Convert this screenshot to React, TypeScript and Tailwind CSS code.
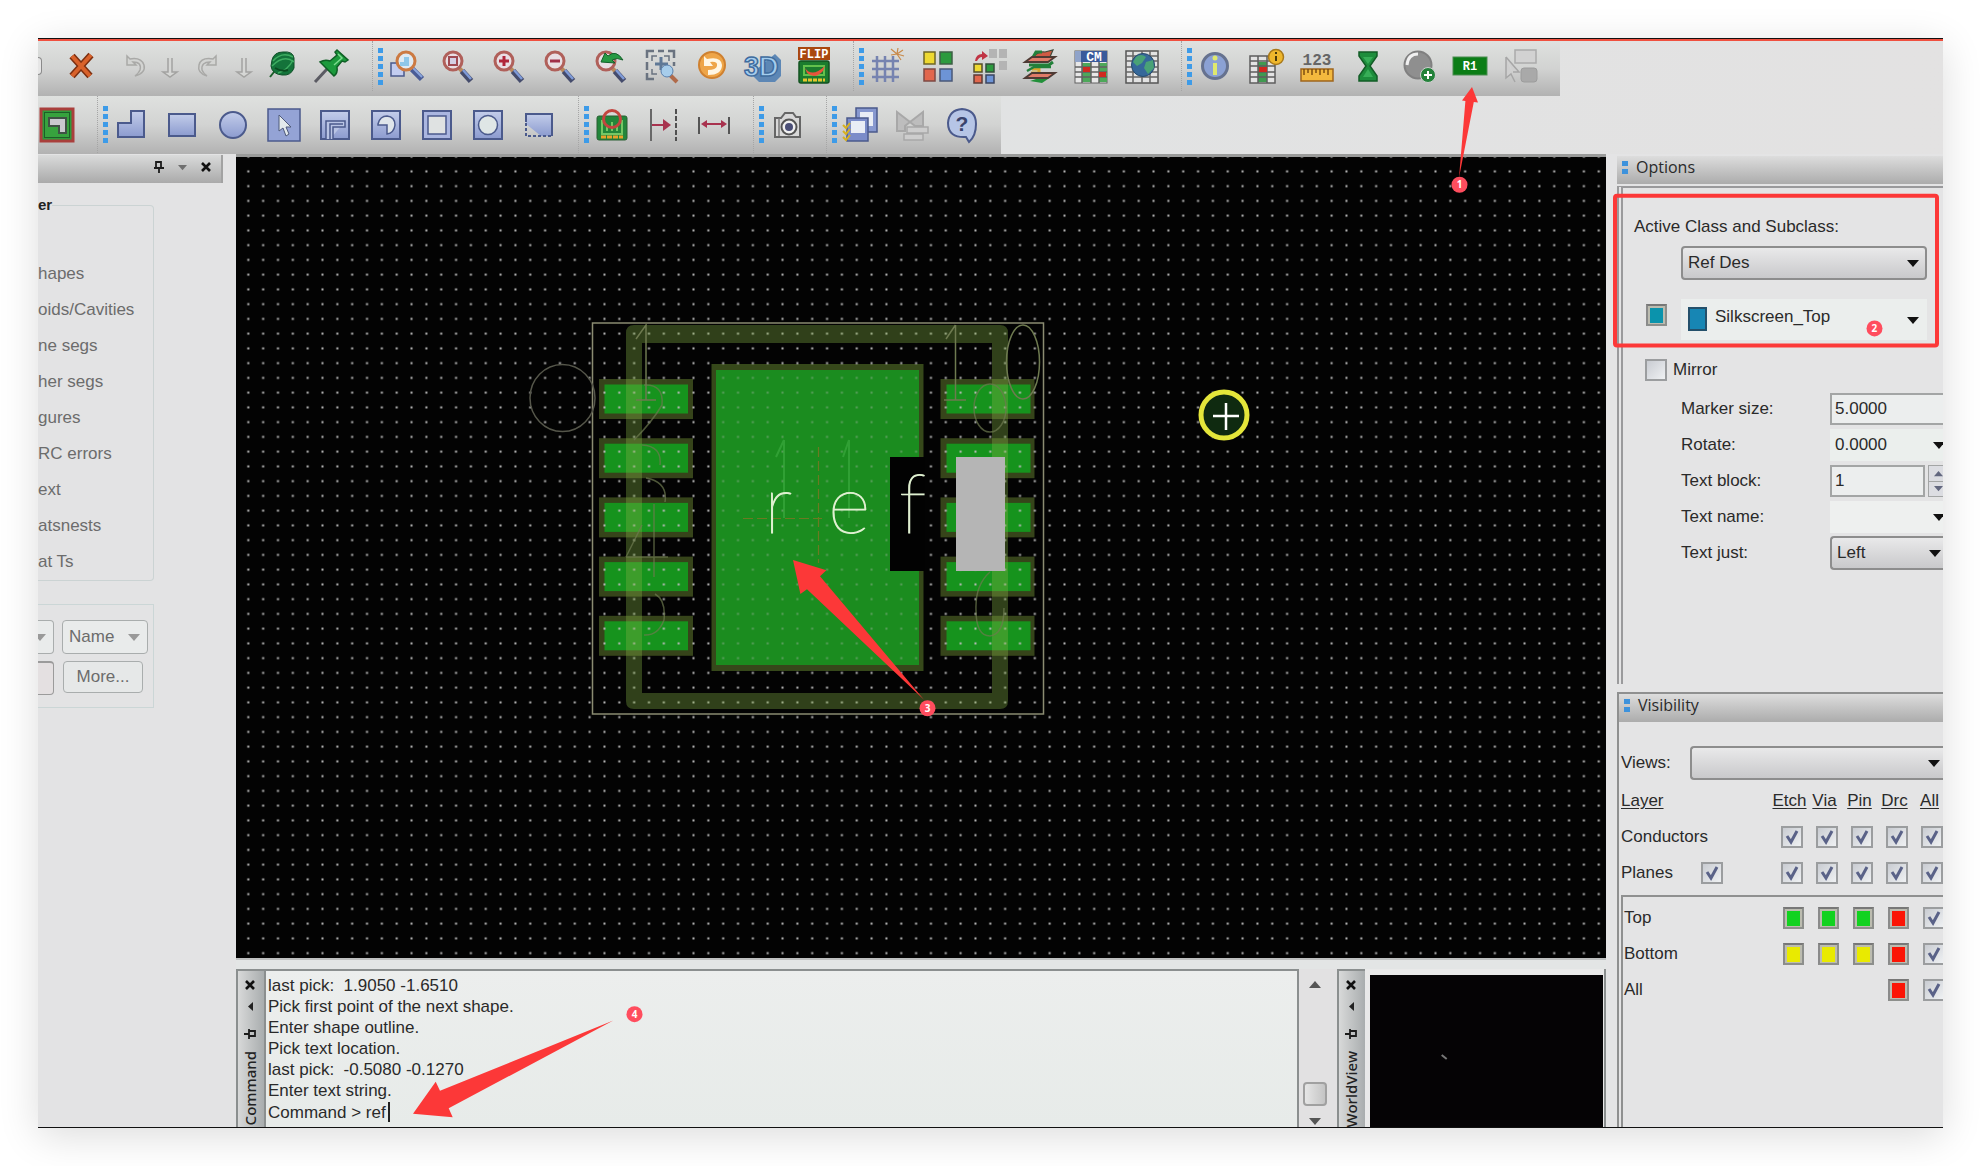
import React from "react";

const SLATE = "#4b5a8c";

function Svg({ children, s = 36 }: { children: React.ReactNode; s?: number }) {
  return (
    <svg width={s} height={s} viewBox="0 0 36 36" fill="none" className="shrink-0 overflow-visible" aria-hidden="true">
      {children}
    </svg>
  );
}

function Lens({ children, ring = "#b0605a" }: { children?: React.ReactNode; ring?: string }) {
  return (
    <>
      <path d="M20 20 L24 24" stroke="#b98a5e" strokeWidth="4" />
      <path d="M23 23 L32 33" stroke="#454c6c" strokeWidth="6" />
      <path d="M24 22 L32 31" stroke="#7f9bd8" strokeWidth="2.5" />
      <circle cx="14" cy="13" r="9" fill="#e9dfe4" stroke={ring} strokeWidth="3" />
      {children}
    </>
  );
}

const icons: Record<string, React.ReactNode> = {
  cross: (
    <>
      <path d="M9 8 L27 28 M28 7 L9 28" stroke="#7c2f10" strokeWidth="7" />
      <path d="M9 8 L27 28 M28 7 L9 28" stroke="#d9622b" strokeWidth="4" />
    </>
  ),
  undo: <path d="M10 8 L10 17 L19 17 L16 14 Q25 14 23 22 Q22 25 18 28 Q29 25 27 17 Q24 9 13 11 Z" stroke="#a9a9a7" strokeWidth="1.5" fill="#d3d4d2" />,
  redo: <path d="M27 8 L27 17 L18 17 L21 14 Q12 14 13 22 Q14 25 18 28 Q8 25 10 17 Q12 9 24 11 Z" stroke="#a9a9a7" strokeWidth="1.5" fill="#d3d4d2" />,
  down: <path d="M16 10 V24 H11 L18 29 L25 24 H20 V10" stroke="#a3a3a1" strokeWidth="1.5" fill="#d6d7d5" />,
  yarn: (
    <>
      <path d="M10 24 L6 29" stroke="#1c5f2a" strokeWidth="2" />
      <path d="M8 12 Q10 4 19 4 Q29 3 30 10 V20 Q27 28 18 27 Q8 26 7 18 Z" fill="#14733a" stroke="#0d4f26" />
      <path d="M9 13 Q18 3 29 9 M8 18 Q20 6 30 14 M14 25 Q24 22 29 12" stroke="#3fae62" strokeWidth="1.5" />
      <path d="M11 20 Q18 24 24 22" stroke="#0b4a20" strokeWidth="2" />
    </>
  ),
  pin: (
    <>
      <path d="M14 21 L2 34" stroke="#5b5b63" strokeWidth="3" />
      <path d="M24 2 L35 12 L32 14 L29 13 L24 19 Q25 25 21 28 L7 14 Q12 11 17 13 L24 7 L22 4 Z" fill="#1c9a3c" stroke="#0f5f25" strokeWidth="1.5" />
      <path d="M25 6 L29 10 L21 17" stroke="#7bdb8d" strokeWidth="1.5" />
    </>
  ),
  zoomWindow: (
    <>
      <rect x="3" y="15" width="13" height="13" fill="#c3cdf0" stroke={SLATE} strokeWidth="1.5" />
      <path d="M24 21 L34 31" stroke="#4a5c96" strokeWidth="6" />
      <path d="M25 20 L34 29" stroke="#8aa5dc" strokeWidth="2" />
      <circle cx="18" cy="13" r="9" fill="#dfeaf2" stroke="#cc7a42" strokeWidth="3" />
      <path d="M12 14 V18 H21 V9 H16 V14 Z" fill="#8fc7e8" />
    </>
  ),
  zoomRect: <Lens><rect x="10" y="9" width="8" height="8" fill="#d4d0e4" stroke="#a04a52" strokeWidth="2" /></Lens>,
  zoomIn: <Lens><path d="M9 13 H19 M14 8 V18" stroke="#b0263a" strokeWidth="3" /></Lens>,
  zoomOut: <Lens><path d="M9 13 H19" stroke="#a0304a" strokeWidth="3" /></Lens>,
  zoomPrev: <Lens><path d="M9 14 L13 5 L16 8 Q24 1 31 12 Q25 9 20 12 L23 15 Z" fill="#279a43" stroke="#14602a" /></Lens>,
  zoomFit: (
    <>
      <path d="M4 10 V3 H11 M15 3 H21 M25 3 H31 V10 M4 14 V22 M4 25 V31 H11 M31 14 V18" stroke="#6a7380" strokeWidth="2.5" />
      <path d="M9 13 V8 H14 M21 8 H26 V13 M9 21 V26 H14" stroke="#6a7380" strokeWidth="1.5" />
      <path d="M18 9 V22 M12 16 H25" stroke="#5f7896" strokeWidth="3" />
      <path d="M27 27 L34 34" stroke="#b06a4a" strokeWidth="4" />
      <circle cx="24" cy="23" r="6" fill="#a7cdeb" stroke="#5a80ad" />
    </>
  ),
  refresh: (
    <>
      <circle cx="18" cy="17" r="13" fill="#eea548" stroke="#cf8130" strokeWidth="2" />
      <path d="M10 8 V18 H19 L16 14 Q24 13 23 18 Q22 22 14 22 V27 Q28 27 28 17 Q27 8 13 11 Z" fill="#fff6e3" />
    </>
  ),
  threeD: (
    <>
      <path d="M6 26 L14 34 H30 L36 28 V12 L30 6 Z" fill="#5d87b5" />
      <text x="-1" y="28" fontFamily="Liberation Sans" fontSize="27" fontWeight="700" fill="#a4cdee" stroke="#3f6c9e" strokeWidth="1.5">3D</text>
    </>
  ),
  flip: (
    <>
      <rect x="3" y="13" width="30" height="22" rx="2" fill="#1c7c2e" stroke="#125220" strokeWidth="1.5" />
      <path d="M8 18 H28 V27 H8 Z" stroke="#63c14c" strokeWidth="2" />
      <path d="M9 20 Q16 30 29 18 L27 23 Q19 32 11 25 Z" fill="#e8543b" />
      <path d="M7 32 H29" stroke="#e5c42e" strokeWidth="3" strokeDasharray="4 1" />
      <rect x="2" y="-1" width="32" height="13" fill="#a9480f" />
      <text x="18" y="10" textAnchor="middle" fontFamily="Liberation Mono" fontSize="12" fontWeight="700" fill="#fff">FLIP</text>
    </>
  ),
  grid: (
    <>
      <path d="M8 8 V34 M16 8 V34 M24 8 V34 M3 13 H30 M3 21 H30 M3 29 H30" stroke="#7683b0" strokeWidth="2.5" />
      <path d="M28 6 L22 1 M28 6 L29 0 M28 6 L34 2 M28 6 L35 8 M28 6 L32 12 M28 6 L22 7" stroke="#c98a4a" strokeWidth="1.2" />
    </>
  ),
  squares: (
    <>
      <rect x="4" y="4" width="11" height="12" fill="#eed931" stroke="#6e6526" strokeWidth="1.5" />
      <rect x="20" y="4" width="12" height="12" fill="#2c9a3e" stroke="#3e5f45" strokeWidth="1.5" />
      <rect x="4" y="21" width="11" height="12" fill="#e2674d" stroke="#7d4a44" strokeWidth="1.5" />
      <rect x="20" y="21" width="12" height="12" fill="#6d94d6" stroke="#4a5878" strokeWidth="1.5" />
    </>
  ),
  squaresMove: (
    <>
      <rect x="18" y="1" width="8" height="9" fill="#b4b4b4" /><rect x="28" y="1" width="8" height="9" fill="#b4b4b4" />
      <rect x="28" y="13" width="8" height="9" fill="#b4b4b4" />
      <path d="M4 13 Q5 6 11 6 V3 L17 8 L11 12 V9 Q8 9 6 13 Z" fill="#c03444" />
      <rect x="3" y="16" width="8" height="8" fill="#eed931" stroke="#554f2a" strokeWidth="1.5" />
      <rect x="15" y="16" width="8" height="8" fill="#2c9a3e" stroke="#354f3b" strokeWidth="1.5" />
      <rect x="3" y="27" width="8" height="8" fill="#e2674d" stroke="#5e3b36" strokeWidth="1.5" />
      <rect x="15" y="27" width="8" height="8" fill="#6d94d6" stroke="#3b4560" strokeWidth="1.5" />
    </>
  ),
  layers: (
    <>
      <path d="M12 8 Q17 3 23 4 L31 2 L28 9 H14 Z" fill="#cf5a44" stroke="#3e4a3a" strokeWidth="1.2" />
      <path d="M10 11 L14 4 H20" stroke="#22803a" strokeWidth="3" />
      <path d="M3 14 L10 9 H33 L26 14 Z" fill="#e07b68" stroke="#4e3a34" strokeWidth="1.8" />
      <path d="M7 17 H27 L31 14" stroke="#22803a" strokeWidth="3" />
      <path d="M10 21 H17 V25 H9" stroke="#d8a62e" strokeWidth="3" />
      <path d="M5 23 L12 19 H29" stroke="#22803a" strokeWidth="2.5" />
      <path d="M3 30 L10 25 H33 L26 30 Z" fill="#e07b68" stroke="#4e3a34" strokeWidth="1.8" />
      <path d="M8 33 L14 31 H26 L20 35 Z" fill="#22903a" />
    </>
  ),
  cm: (
    <>
      <rect x="2" y="3" width="32" height="32" fill="#e8e8e8" stroke="#626262" />
      <rect x="2" y="3" width="32" height="11" fill="#8fa3c9" />
      <rect x="8" y="3" width="26" height="11" fill="#3a5a9b" />
      <path d="M9 15 H18 V34 H9 Z M26 15 H34 V34 H26 Z" fill="#4da85a" />
      <path d="M2 19 H34 M2 24 H34 M2 29 H34 M9 14 V35 M18 14 V35 M26 14 V35" stroke="#626262" strokeWidth="1.5" />
      <rect x="10" y="19" width="7" height="5" fill="#d02a20" /><rect x="26" y="24" width="7" height="5" fill="#d02a20" />
      <text x="21" y="13" textAnchor="middle" fontFamily="Liberation Mono" fontSize="13" fontWeight="700" fill="#fff">CM</text>
    </>
  ),
  globe: (
    <>
      <rect x="2" y="3" width="32" height="32" fill="#e2e2e2" stroke="#555" strokeWidth="1.5" />
      <path d="M2 8 H34 M2 13 H34 M2 19 H34 M2 24 H34 M2 29 H34 M9 3 V35 M18 3 V35 M26 3 V35" stroke="#666" strokeWidth="1.5" />
      <circle cx="19" cy="17" r="11.5" fill="#35689a" stroke="#274a6b" />
      <path d="M12 9 Q17 5 22 9 L18 15 L13 18 L9 14 Z M22 14 L29 12 L30 20 L24 26 L20 20 Z" fill="#49a276" />
    </>
  ),
  info: (
    <>
      <circle cx="18" cy="18" r="12.5" fill="#8ba1d4" stroke="#66728f" strokeWidth="3" />
      <path d="M18 15 V27" stroke="#dfe86d" strokeWidth="4" /><circle cx="18" cy="10" r="2.5" fill="#dfe86d" />
    </>
  ),
  tableInfo: (
    <>
      <rect x="2" y="8" width="25" height="27" fill="#e3e3e3" stroke="#5e5e5e" strokeWidth="1.5" />
      <path d="M10 14 H19 V34 H10 Z" fill="#3f9a50" />
      <path d="M2 13 H27 M2 18 H27 M2 24 H27 M2 29 H27 M10 8 V35 M19 8 V35" stroke="#5e5e5e" strokeWidth="1.5" />
      <rect x="11" y="19" width="8" height="5" fill="#d0281f" />
      <circle cx="28" cy="9" r="7.5" fill="#eeb72c" stroke="#a9791a" strokeWidth="1.5" />
      <path d="M28 8 V13 M28 4 V6" stroke="#4a3a0a" strokeWidth="2" />
    </>
  ),
  ruler: (
    <>
      <text x="18" y="17" textAnchor="middle" fontFamily="Liberation Mono" fontSize="16" fontWeight="700" fill="#666">123</text>
      <rect x="2" y="21" width="32" height="12" fill="#f3b93e" stroke="#9e651c" strokeWidth="1.5" />
      <path d="M5 21 V27 M9 21 V25 M13 21 V27 M17 21 V25 M21 21 V27 M25 21 V25 M29 21 V27" stroke="#7d4f12" strokeWidth="1.5" />
    </>
  ),
  hourglass: (
    <>
      <path d="M9 4 H27 V8 L20 18 L27 28 V33 H9 V28 L16 18 L9 8 Z" fill="#1d8d3c" stroke="#125c26" strokeWidth="1.5" />
      <path d="M13 9 H23 L18 16 Z M13 29 L18 21 L23 29 Z" fill="#37ae57" />
    </>
  ),
  addCircle: (
    <>
      <circle cx="17" cy="17" r="13.5" fill="#8f8f8f" stroke="#808080" strokeWidth="2" />
      <path d="M6 17 Q7 6 17 6" stroke="#f0f0f0" strokeWidth="3" />
      <circle cx="27" cy="27" r="7.5" fill="#23823a" stroke="#d0d0d0" strokeWidth="1" />
      <path d="M23 27 H31 M27 23 V31" stroke="#fff" strokeWidth="2" />
    </>
  ),
  r1: (
    <>
      <rect x="1" y="9" width="34" height="18" fill="#0b7d16" stroke="#4a8d50" />
      <text x="18" y="22" textAnchor="middle" fontFamily="Liberation Mono" fontSize="12" fontWeight="700" fill="#fff">R1</text>
    </>
  ),
  ghost: (
    <>
      <rect x="12" y="2" width="21" height="13" fill="#d2d2d2" stroke="#ababab" strokeWidth="1.5" />
      <rect x="18" y="20" width="16" height="14" rx="3" fill="#a9a9a9" stroke="#9c9c9c" />
      <path d="M3 9 V30 L8 26 L12 34 M3 9 L16 24 H10" stroke="#a6a6a6" strokeWidth="1.5" fill="#cfcfcf" />
    </>
  ),
  shapeSel: (
    <>
      <rect x="2" y="2" width="32" height="32" fill="#2f9a3a" stroke="#a93f3c" strokeWidth="3" />
      <rect x="5.500" y="5.500" width="25" height="25" fill="#37a23e" stroke="#1c5f28" />
      <path d="M10 11 H27 V26 H20 V19 H10 Z" fill="#c9c9cf" stroke="#3f5245" strokeWidth="2" />
    </>
  ),
  lshape: <path d="M18 4 H31 V30 H5 V16 H18 Z" fill="url(#steel)" stroke={SLATE} strokeWidth="2" />,
  rect: <rect x="5" y="7" width="26" height="22" fill="url(#steel)" stroke={SLATE} strokeWidth="2" />,
  circle: <circle cx="18" cy="18" r="13" fill="url(#steel)" stroke={SLATE} strokeWidth="2" />,
  select: (
    <>
      <rect x="2" y="2" width="32" height="32" fill="#94a3d5" stroke={SLATE} strokeWidth="1.5" />
      <path d="M13 8 V24 L17 21 L20 29 L23 27 L20 20 H25 Z" fill="#e3eaec" stroke="#4f5a7a" />
    </>
  ),
  lpath: (
    <>
      <rect x="4" y="4" width="28" height="28" fill="url(#steel)" stroke={SLATE} strokeWidth="2" />
      <path d="M9 32 V14 H28 V20 H16 V32 M13 32 V17 H26" fill="#b9c4e4" stroke={SLATE} strokeWidth="1.5" />
    </>
  ),
  arc: (
    <>
      <rect x="4" y="4" width="28" height="28" fill="url(#steel)" stroke={SLATE} strokeWidth="2" />
      <path d="M10 17 Q12 9 19 9 Q27 10 27 18 Q26 26 19 27 V18 H10 Z" fill="#dfe5ea" stroke={SLATE} strokeWidth="1.5" />
    </>
  ),
  square: (
    <>
      <rect x="4" y="4" width="28" height="28" fill="#aab6e0" stroke={SLATE} strokeWidth="2" />
      <rect x="9" y="9" width="18" height="18" fill="#dfe2e2" stroke={SLATE} strokeWidth="1.5" />
    </>
  ),
  hole: (
    <>
      <rect x="4" y="4" width="28" height="28" fill="url(#steel)" stroke={SLATE} strokeWidth="2" />
      <circle cx="18" cy="18" r="9.5" fill="#dfe6e6" stroke={SLATE} strokeWidth="1.5" />
    </>
  ),
  dashed: (
    <>
      <path d="M5 7 H31 V29 H20 L5 17 Z" fill="url(#steel)" />
      <path d="M5 15 V7 H31 V29" stroke={SLATE} strokeWidth="2" />
      <path d="M5 16 V29 H31" stroke={SLATE} strokeWidth="2" strokeDasharray="3 2" />
    </>
  ),
  board: (
    <>
      <rect x="3" y="9" width="30" height="24" rx="2" fill="#22863a" stroke="#2a5f33" />
      <path d="M8 13 V27 H28 V13 M13 18 V24 M18 15 V24 M23 18 V24" stroke="#74c765" strokeWidth="2" />
      <path d="M7 30 H29" stroke="#e8a12a" strokeWidth="3" strokeDasharray="5 1" />
      <circle cx="18" cy="12" r="8.5" stroke="#c3453f" strokeWidth="3" />
    </>
  ),
  arrowDash: (
    <>
      <path d="M6 2 V34" stroke="#686868" strokeWidth="2" />
      <path d="M31 2 V34" stroke="#505050" strokeWidth="2" strokeDasharray="5 2" />
      <path d="M7 18 H20" stroke="#a8324e" strokeWidth="2" /><path d="M18 12 L26 18 L18 24 Z" fill="#a8324e" />
    </>
  ),
  dims: (
    <>
      <path d="M3 10 V27 M33 10 V27" stroke="#555" strokeWidth="2" />
      <path d="M9 17 H28" stroke="#a8324e" strokeWidth="2" />
      <path d="M5 17 L11 13 V21 Z M31 17 L25 13 V21 Z" fill="#a8324e" />
    </>
  ),
  camera: (
    <>
      <path d="M6 11 H12 L16 6 H24 L27 10 H31 V30 H6 Z" fill="#d8d8d8" stroke="#666" strokeWidth="2" />
      <path d="M10 11 V29" stroke="#7a7a7a" strokeWidth="1.5" />
      <circle cx="20" cy="20" r="7.5" fill="#f0f0f0" stroke="#555" strokeWidth="2" />
      <circle cx="20" cy="20" r="4" fill="#4b4f77" />
    </>
  ),
  docs: (
    <>
      <path d="M14 1 H35 V25 H14 Z" fill="#8798cf" stroke={SLATE} strokeWidth="1.5" /><path d="M18 5 H31 V19 H18 Z" fill="#e9edf5" />
      <path d="M5 11 H26 V34 H5 Z" fill="#7b8cc9" stroke={SLATE} strokeWidth="1.5" /><path d="M9 14 H23 V26 H9 Z" fill="#e9edf5" />
      <path d="M1 18 L4 21 L8 16 M1 24 L4 27 L8 22 M1 30 L4 33 L8 28" stroke="#d8b21f" strokeWidth="2" />
    </>
  ),
  chartGhost: (
    <>
      <path d="M4 5 V24 H12 V19 L17 15 L22 19 H30 V5 L17 15 Z" stroke="#a8a8a8" strokeWidth="2" fill="#bdbdbd" />
      <path d="M14 20 H35 V26 H14 Z M11 27 H30 V33 H11 Z" stroke="#a8a8a8" strokeWidth="1.5" fill="#cdcdcd" />
    </>
  ),
  help: (
    <>
      <path d="M18 2 Q32 3 32 17 Q32 29 25 35 L22 30 Q4 31 4 16 Q5 3 18 2 Z" fill="#b6c5e6" stroke={SLATE} strokeWidth="2" />
      <text x="18" y="24" textAnchor="middle" fontFamily="Liberation Sans" fontSize="21" fontWeight="700" fill="#39436d">?</text>
    </>
  ),
};

function Tool({ name, className = "w-[43px]" }: { name: string; className?: string }) {
  return (
    <button type="button" aria-label={name} className={`flex h-full shrink-0 items-center justify-center ${className}`}>
      <Svg>{icons[name]}</Svg>
    </button>
  );
}

function Group({ names }: { names: string[] }) {
  return (
    <div className="flex h-full items-center border-l border-dotted border-[#a5a5a5] pr-[18px] pl-[5px]">
      <div className="mr-px flex flex-col gap-[3px]">
        {[0, 1, 2, 3, 4].map((i) => (
          <span key={i} className="h-[5px] w-[5px] bg-[#3d9be8]" />
        ))}
      </div>
      <div className="flex h-full gap-2">
        {names.map((n) => (
          <Tool key={n} name={n} />
        ))}
      </div>
    </div>
  );
}

const bar = "bg-linear-to-b from-[#dfe1df] via-[#d2d3d2] to-[#b2b2b2]";

function Toolbars() {
  return (
    <header className="flex flex-col items-start bg-linear-to-r from-[#dfe3e4] to-[#e3e2e2]">
      <div className={`flex h-[55px] pb-[5px] ${bar}`}>
        <div className="flex w-[334px]">
          <div className="my-auto h-[18px] w-[4px] rounded-r border border-l-0 border-[#8a8a8a] bg-[#e6e6e6]" />
          <Tool name="cross" className="w-[77px]" />
          <Tool name="undo" className="w-[32px]" />
          <Tool name="down" className="w-[37px]" />
          <Tool name="redo" className="w-[37px]" />
          <Tool name="down" className="w-[37px]" />
          <Tool name="yarn" className="w-[39px]" />
          <Tool name="pin" className="w-[60px]" />
        </div>
        <Group names={["zoomWindow", "zoomRect", "zoomIn", "zoomOut", "zoomPrev", "zoomFit", "refresh", "threeD", "flip"]} />
        <Group names={["grid", "squares", "squaresMove", "layers", "cm", "globe"]} />
        <Group names={["info", "tableInfo", "ruler", "hourglass", "addCircle", "r1", "ghost"]} />
      </div>
      <div className={`flex h-[58px] pb-px ${bar}`}>
        <div className="flex w-[59px]">
          <Tool name="shapeSel" className="w-[38px]" />
        </div>
        <Group names={["lshape", "rect", "circle", "select", "lpath", "arc", "square", "hole", "dashed"]} />
        <Group names={["board", "arrowDash", "dims"]} />
        <Group names={["camera"]} />
        <Group names={["docs", "chartGhost", "help"]} />
      </div>
    </header>
  );
}

function Pushpin({ className = "" }: { className?: string }) {
  return (
    <svg width="12" height="12" viewBox="0 0 12 12" className={className} aria-hidden="true">
      <path d="M3 1 H8 V7 H3 Z M1 7 H11 M6 7 V12 M8 1 V7" fill="none" stroke="#1c1c1c" strokeWidth="1.8" />
    </svg>
  );
}

function Close() {
  return (
    <svg width="12" height="10" viewBox="0 0 12 10" aria-hidden="true">
      <path d="M2 1 L10 9 M10 1 L2 9" stroke="#111" strokeWidth="2.6" />
    </svg>
  );
}

function Down({ color = "#111", className = "" }: { color?: string; className?: string }) {
  return (
    <svg width="12" height="7" viewBox="0 0 12 7" className={`pointer-events-none shrink-0 ${className}`} aria-hidden="true">
      <path d="M0 0 H12 L6 7 Z" fill={color} />
    </svg>
  );
}

const filters = ["hapes", "oids/Cavities", "ne segs", "her segs", "gures", "RC errors", "ext", "atsnests", "at Ts"];

function LeftPanel() {
  return (
    <aside className="flex w-[198px] shrink-0 flex-col overflow-hidden bg-[#e3e3e4] pt-px">
      <div className="mr-[13px] flex h-[28px] items-center justify-end gap-[13px] border-r-2 border-[#a2a2a2] bg-linear-to-b from-[#dadbdb] to-[#aaaaaa] pr-[9px] pb-[4px]">
        <button type="button" aria-label="Pin panel"><Pushpin /></button>
        <button type="button" aria-label="Panel menu"><Down color="#6f6f6f" className="w-[9px]" /></button>
        <button type="button" aria-label="Close panel"><Close /></button>
      </div>
      <fieldset className="mt-[12px] h-[386px] w-[116px] rounded-r-sm border border-l-0 border-[#cbd3d3] text-[17px] text-[#6c6c6c]">
        <legend className="text-[15px] leading-[20px] font-bold text-[#222]">er</legend>
        <ul className="pt-[41px]">
          {filters.map((f) => (
            <li key={f} className="h-9 leading-9 whitespace-nowrap">{f}</li>
          ))}
        </ul>
      </fieldset>
      <div className="mt-[23px] grid h-[104px] w-[116px] grid-cols-[16px_86px] content-start gap-x-2 gap-y-[7px] border border-l-0 border-[#cbd6d6] pt-[15px] text-[17px] text-[#6c6c6c]">
        <div className="flex h-[34px] items-center rounded-r border border-l-0 border-[#a9adad] bg-[#e9ebeb]">
          <Down color="#999" className="-ml-[4px]" />
        </div>
        <label className="relative flex h-[34px] items-center">
          <select aria-label="Find by" className="h-full w-full appearance-none rounded border border-[#a9adad] bg-[#e9ebeb] pl-[6px]">
            <option>Name</option>
          </select>
          <Down color="#999" className="absolute right-2" />
        </label>
        <input aria-label="Find text" className="h-[34px] w-full rounded-r border border-t-2 border-l-0 border-[#9b9b9b] bg-[#e4e0e1]" />
        <button type="button" className="ml-px h-[32px] w-[80px] rounded border border-[#a9adad] bg-[#e6e8e8]">More...</button>
      </div>
    </aside>
  );
}

const padRows = [0, 1, 2, 3, 4];

function Canvas() {
  return (
    <svg className="block min-h-0 w-full flex-1 bg-[#030303]" viewBox="236 157 1370 801" preserveAspectRatio="xMinYMin slice" role="img" aria-label="Footprint canvas">
      <defs>
        <pattern id="dots" x="240.900" y="164" width="14.840" height="14.750" patternUnits="userSpaceOnUse">
          <rect x="6.400" y="6.400" width="2" height="2" fill="#bcbcbc" />
        </pattern>
      </defs>
      {padRows.map((i) => (
        <g key={i} transform={`translate(0 ${i * 59.2})`}>
          <rect x="599" y="379" width="94" height="40" fill="#36441a" />
          <rect x="604.5" y="384.5" width="83.5" height="29" fill="#16931d" />
          <rect x="940.5" y="379" width="94" height="40" fill="#36441a" />
          <rect x="946.5" y="384.5" width="84" height="29" fill="#16931d" />
        </g>
      ))}
      <rect x="711.5" y="364" width="212" height="307" fill="#36481a" />
      <rect x="716" y="370" width="203" height="295" fill="#1b8c1f" />
      <rect x="236" y="156" width="480" height="802" fill="url(#dots)" />
      <rect x="716" y="156" width="203" height="214" fill="url(#dots)" />
      <rect x="716" y="370" width="203" height="295" fill="url(#dots)" opacity="0.4" />
      <rect x="716" y="665" width="203" height="293" fill="url(#dots)" />
      <rect x="919" y="156" width="687" height="802" fill="url(#dots)" />
      <path fillRule="evenodd" d="M634 325 H1000 Q1008 325 1008 333 V701 Q1008 709 1000 709 H634 Q626 709 626 701 V333 Q626 325 634 325 Z M642 343 H992 V693 H642 Z" fill="#82b046" fillOpacity="0.36" />
      <rect x="592.5" y="323" width="451" height="391" fill="none" stroke="#8b8c72" strokeWidth="1.5" />
      <g fill="none" stroke="#6e7a50" strokeWidth="1.5">
        <ellipse cx="562.5" cy="398" rx="32.5" ry="33.5" stroke="#55564a" />
        <ellipse cx="1023" cy="362" rx="16.5" ry="37" />
        <path d="M636 339 L646 325 V400 M636 400 H656 M955.500 325 V400 M946 339 L955.500 325 M944 400 H966" />
        <g opacity="0.7">
          <path d="M644 385 Q664 384 662 405 Q652 422 634 440" />
          <ellipse cx="990" cy="408" rx="16" ry="24" />
          <path d="M642 445 Q662 446 660 465 M646 478 Q668 482 665 502 M654 504 V577 M626 557 L642 525 M626 557 H668 M655 594 Q666 600 664 620 Q658 636 644 635 M976 610 Q976 636 990 636 Q1004 634 1004 608 M976 610 Q975 585 990 572" />
        </g>
      </g>
      <g fill="none" stroke="#3fae42" strokeWidth="2" opacity="0.6">
        <path d="M784 440 V518 M776 457 L784 440 M849 440 V518 M843 457 L849 440" />
      </g>
      <path d="M818.500 447 V563 M743 518.500 H822" fill="none" stroke="#6b7a22" strokeWidth="1.2" strokeDasharray="10 4" />
      <rect x="890" y="457" width="35" height="114" fill="#020202" />
      <rect x="956" y="457" width="49" height="114" fill="#b5b5b5" />
      <text x="764 828 899" y="533" fontFamily="Lato, sans-serif" fontWeight="200" fontSize="82" fill="#dff0d0" stroke="#dff0d0" strokeWidth="1">ref</text>
      <circle cx="1224" cy="415" r="23" fill="#0f2a10" stroke="#e4e63a" strokeWidth="5" />
      <path d="M1213 416 H1239 M1226 403 V430" stroke="#fff" strokeWidth="2.5" />
    </svg>
  );
}

function SideStrip({ title }: { title: string }) {
  return (
    <div className="flex w-[28px] shrink-0 flex-col items-center overflow-hidden border-t-2 border-l-2 border-[#8b8f8f] bg-linear-to-r from-[#d8d9d9] to-[#a9adae] pt-[9px] pr-[3px]">
      <button type="button" aria-label={`Close ${title}`}><Close /></button>
      <svg width="6" height="9" viewBox="0 0 6 9" className="mt-[12px] shrink-0" aria-hidden="true"><path d="M6 0 V9 L1 4.500 Z" fill="#222" /></svg>
      <button type="button" aria-label={`Pin ${title}`} className="mt-[17px]"><Pushpin className="rotate-90" /></button>
      <span className="mt-[11px] rotate-180 font-['Noto_Sans'] text-[15px] leading-[24px] font-medium text-[#222] [writing-mode:vertical-rl]">{title}</span>
    </div>
  );
}

const log = ["last pick:  1.9050 -1.6510", "Pick first point of the next shape.", "Enter shape outline.", "Pick text location.", "last pick:  -0.5080 -0.1270", "Enter text string."];

function BottomDock() {
  return (
    <section className="flex h-[158px] shrink-0 overflow-hidden">
      <SideStrip title="Command" />
      <div className="min-w-0 flex-1 border-x-2 border-t-2 border-[#8b8f8f] bg-linear-to-b from-[#eceeed] to-[#e7ebe9] pt-[4px] pl-[2px] text-[17px] leading-[21px] whitespace-pre text-[#2a2a2a]">
        {log.map((l) => <p key={l}>{l}</p>)}
        <label className="flex h-[22px] items-center">
          <span>{"Command > "}</span>
          <input defaultValue="ref" className="w-[22px] bg-transparent outline-none" />
          <span className="h-[20px] w-[2px] bg-[#222]" />
        </label>
      </div>
      <div className="flex w-[38px] shrink-0 flex-col items-center bg-[#e2e1e2] pr-[7px] pb-[2px]">
        <Down color="#555" className="mt-[12px] rotate-180" />
        <div className="mt-auto h-[24px] w-[24px] rounded-sm border-2 border-[#a0a0a0] bg-linear-to-r from-[#e6e6e6] to-[#c4c4c4]" />
        <Down color="#555" className="mt-[12px]" />
      </div>
      <SideStrip title="WorldView" />
      <div className="flex w-[241px] shrink-0 border-r-2 border-[#8b8f8f] bg-[#e9e9e9] pt-[6px] pr-px pl-[5px]">
        <svg className="h-full w-full bg-[#050305]" viewBox="0 0 234 152" preserveAspectRatio="none" aria-label="World view" role="img">
          <path d="M72 80 L77 84" stroke="#777" strokeWidth="2" />
        </svg>
      </div>
    </section>
  );
}

function PanelTitle({ children }: { children: React.ReactNode }) {
  return (
    <h2 className="flex h-[28px] shrink-0 items-center gap-[8px] bg-linear-to-b from-[#dddddd] to-[#acacac] pb-[6px] pl-[5px] font-['Open_Sans'] text-[16px] leading-[20px] text-[#2a2a2a]">
      <span className="flex flex-col gap-[3px]">
        <span className="h-[5px] w-[6px] bg-[#3d92dc]" />
        <span className="h-[5px] w-[6px] bg-[#3d92dc]" />
      </span>
      {children}
    </h2>
  );
}

const lookButton = "appearance-none rounded border-2 border-[#8d8d8d] bg-linear-to-b from-[#e9e9ea] to-[#c9c9cb]";

function Check({ label, checked = true }: { label: string; checked?: boolean }) {
  return (
    <span className="grid h-[22px] w-[22px] shrink-0">
      <input type="checkbox" aria-label={label} defaultChecked={checked} className="col-start-1 row-start-1 appearance-none border-2 border-[#9b9d9f] bg-linear-to-br from-[#c9ccd2] to-[#eff1f3]" />
      {checked && (
        <svg viewBox="0 0 22 22" className="pointer-events-none col-start-1 row-start-1" aria-hidden="true">
          <path d="M6 10 L10 16 L16 5" fill="none" stroke="#5a6288" strokeWidth="3" />
        </svg>
      )}
    </span>
  );
}

const swatchColors = {
  green: "bg-[#12d220]",
  yellow: "bg-[#e9ea00]",
  red: "bg-[#fb1505]",
  teal: "bg-[#0b93ac]",
};

function Swatch({ color, label }: { color: keyof typeof swatchColors; label: string }) {
  return (
    <button type="button" aria-label={label} className="flex h-[22px] w-[21px] items-center justify-center border-2 border-t-[#777] border-r-[#8d8f8c] border-b-[#8d8f8c] border-l-[#8a8a8a] bg-[#bcbcb0]">
      <span className={`h-[15px] w-[13px] ${swatchColors[color]}`} />
    </button>
  );
}

function OptionsPanel() {
  const row = "flex h-9 items-center";
  const name = "w-[149px] shrink-0";
  return (
    <section className="flex h-[530px] shrink-0 flex-col pt-[2px]">
      <PanelTitle>Options</PanelTitle>
      <div className="mt-[2px] flex-1 border-t-2 border-l-[6px] border-[#9a9a9c] [border-left-style:double]">
        <div className="pt-[28px] pl-[11px]">
          <label htmlFor="cls" className="block leading-[22px]">Active Class and Subclass:</label>
          <div className="relative mt-[8px] ml-[47px] flex h-[34px] w-[246px] items-center">
            <select id="cls" className={`h-full w-full pl-[5px] ${lookButton}`}><option>Ref Des</option></select>
            <Down className="absolute right-[8px]" />
          </div>
          <div className="mt-[19px] flex items-start pl-[12px]">
            <div className="mt-[5px]"><Swatch color="teal" label="Layer colour" /></div>
            <div className="relative ml-[14px] flex h-[41px] w-[246px] items-start bg-[#ebeeed] pt-[5px] pl-[7px]">
              <span className="mt-[3px] h-[24px] w-[19px] border-2 border-[#24506b] bg-[#1786b4]" />
              <select aria-label="Subclass" className="ml-[8px] h-[24px] flex-1 appearance-none bg-transparent"><option>Silkscreen_Top</option></select>
              <Down className="absolute top-[18px] right-[8px]" />
            </div>
          </div>
          <label className="mt-[19px] flex h-[22px] items-center gap-[6px] pl-[11px]">
            <Check label="Mirror" checked={false} />
            Mirror
          </label>
          <div className="mt-[10px] overflow-hidden pl-[47px]">
            <div className={row}>
              <label htmlFor="ms" className={name}>Marker size:</label>
              <input id="ms" defaultValue="5.0000" className="h-[32px] min-w-0 flex-1 border-2 border-r-0 border-[#a3a5a5] bg-[#eceeee] pl-[3px]" />
            </div>
            <div className={`relative ${row}`}>
              <label htmlFor="rot" className={name}>Rotate:</label>
              <select id="rot" className="h-[32px] min-w-0 flex-1 appearance-none bg-[#ebefed] pl-[5px]"><option>0.0000</option></select>
              <Down className="absolute -right-[2px]" />
            </div>
            <div className={row}>
              <label htmlFor="tb" className={name}>Text block:</label>
              <input id="tb" defaultValue="1" className="h-[32px] w-[95px] border-2 border-[#a3a5a5] bg-[#eceeee] pl-[3px]" />
              <span className="ml-[3px] flex h-[32px] flex-1 flex-col border border-r-0 border-[#a3a5a5]">
                <button type="button" aria-label="Increase" className="flex flex-1 items-center justify-end border-b border-[#a3a5a5] bg-[#dcdde2]"><Down color="#62677f" className="w-[9px] rotate-180" /></button>
                <button type="button" aria-label="Decrease" className="flex flex-1 items-center justify-end bg-[#dcdde2]"><Down color="#62677f" className="w-[9px]" /></button>
              </span>
            </div>
            <div className={`relative ${row}`}>
              <label htmlFor="tn" className={name}>Text name:</label>
              <select id="tn" className="h-[32px] min-w-0 flex-1 appearance-none bg-[#eef0ef]" />
              <Down className="absolute -right-[2px]" />
            </div>
            <div className={`relative ${row}`}>
              <label htmlFor="tj" className={name}>Text just:</label>
              <select id="tj" className={`h-[34px] min-w-0 flex-1 rounded-r-none border-r-0 pl-[5px] ${lookButton}`}><option>Left</option></select>
              <Down className="absolute right-[2px]" />
            </div>
          </div>
        </div>
      </div>
    </section>
  );
}

const cols = ["Etch", "Via", "Pin", "Drc", "All"];
type Color = keyof typeof swatchColors;
const layers: { name: string; cells: (Color | "check" | null)[] }[] = [
  { name: "Top", cells: ["green", "green", "green", "red", "check"] },
  { name: "Bottom", cells: ["yellow", "yellow", "yellow", "red", "check"] },
  { name: "All", cells: [null, null, null, "red", "check"] },
];

function Cols() {
  return (
    <colgroup>
      <col />
      {cols.map((c) => <col key={c} className="w-[35px]" />)}
    </colgroup>
  );
}

function VisibilityPanel() {
  return (
    <section className="mt-[8px] flex min-h-0 flex-1 flex-col border-t-2 border-l-2 border-[#8f9090]">
      <PanelTitle>Visibility</PanelTitle>
      <div className="relative mt-[24px] flex h-[34px] items-center pl-[2px]">
        <label htmlFor="views" className="w-[69px]">Views:</label>
        <select id="views" className={`h-full flex-1 rounded-r-none border-r-0 ${lookButton}`} />
        <Down className="absolute right-[3px]" />
      </div>
      <table className="mt-[3px] w-[calc(100%+4px)] table-fixed">
        <Cols />
        <thead>
          <tr className="h-9 underline underline-offset-2">
            <th className="pl-[2px] text-left font-normal">Layer</th>
            {cols.map((c) => <th key={c} className="p-0 text-center font-normal"><span className="-mx-2">{c}</span></th>)}
          </tr>
        </thead>
        <tbody>
          {["Conductors", "Planes"].map((n) => (
            <tr key={n} className="h-9">
              <th className="pl-[2px] text-left font-normal">
                <span className="flex items-center"><span className="w-[80px]">{n}</span>{n === "Planes" && <Check label="Planes" />}</span>
              </th>
              {cols.map((c) => <td key={c} className="pl-[9px]"><Check label={`${n} ${c}`} /></td>)}
            </tr>
          ))}
        </tbody>
      </table>
      <div className="mt-[4px] ml-[2px] flex-1 border-t-2 border-l-2 border-[#8f9090] pt-[3px]">
        <table className="w-[calc(100%+4px)] table-fixed">
          <Cols />
          <tbody>
            {layers.map((l) => (
              <tr key={l.name} className="h-9">
                <th className="pl-px text-left font-normal">{l.name}</th>
                {l.cells.map((c, i) => (
                  <td key={cols[i]} className="pl-[11px]">
                    {c === "check" ? <Check label={`${l.name} ${cols[i]}`} /> : c && <Swatch color={c} label={`${l.name} ${cols[i]}`} />}
                  </td>
                ))}
              </tr>
            ))}
          </tbody>
        </table>
      </div>
    </section>
  );
}

const badges = [
  { n: 1, x: 1459.5, y: 184 },
  { n: 2, x: 1874.5, y: 328 },
  { n: 3, x: 927.5, y: 708.5 },
  { n: 4, x: 634.5, y: 1015 },
];

function Annotations() {
  return (
    <svg className="pointer-events-none absolute inset-0 h-full w-full" viewBox="38 38 1905 1090" preserveAspectRatio="none" aria-hidden="true">
      <rect x="1615" y="195" width="322" height="150" rx="2" fill="none" stroke="#fc3838" strokeWidth="4" />
      <g fill="#fc3838">
        <path d="M1472 86 L1478 101.700 L1473.800 101 L1459 177 L1465.400 100 L1462 99.700 Z" />
        <path d="M793 560 L826.400 570.300 L820 576.300 L924 700 L807 589.300 L800.400 594 Z" />
        <path d="M413 1114.700 L435.700 1082.700 L440 1091.700 L613.300 1021.300 L448.700 1109.300 L452.700 1118.300 Z" />
      </g>
      {badges.map((b) => (
        <g key={b.n}>
          <circle cx={b.x} cy={b.y} r="8" fill="#ff4d5e" />
          <text x={b.x} y={b.y + 3.5} textAnchor="middle" fontFamily="Noto Sans" fontSize="10" fontWeight="700" fill="#fff">{b.n}</text>
        </g>
      ))}
    </svg>
  );
}

export default function App() {
  return (
    <div className="flex min-h-screen bg-white p-[38px] font-['Liberation_Sans',sans-serif] text-[17px] text-[#2a2a2a]">
      <svg width="0" height="0" className="absolute" aria-hidden="true">
        <defs>
          <linearGradient id="steel" x1="0" y1="0" x2="0" y2="1">
            <stop offset="0" stopColor="#c3cdea" />
            <stop offset="1" stopColor="#8c9bcf" />
          </linearGradient>
        </defs>
      </svg>
      <main className="relative flex min-w-0 flex-1 flex-col overflow-hidden border-y border-[#111] bg-[#e4e4e5] shadow-[0_8px_38px_rgba(0,0,0,0.14)]">
        <div className="h-[2px] shrink-0 bg-[#f0503f]" />
        <Toolbars />
        <div className="flex min-h-0 flex-1">
          <LeftPanel />
          <div className="flex min-w-0 flex-1 flex-col">
            <div className="flex min-h-0 flex-1 flex-col border-t-[3px] border-[#9a9b9a]"><Canvas /></div>
            <div className="h-[11px] shrink-0 border-t-2 border-[#bfc1c1] bg-[#e3e5e5]" />
            <BottomDock />
          </div>
          <aside className="ml-[11px] flex w-[326px] shrink-0 flex-col overflow-hidden">
            <OptionsPanel />
            <VisibilityPanel />
          </aside>
        </div>
        <Annotations />
      </main>
    </div>
  );
}
